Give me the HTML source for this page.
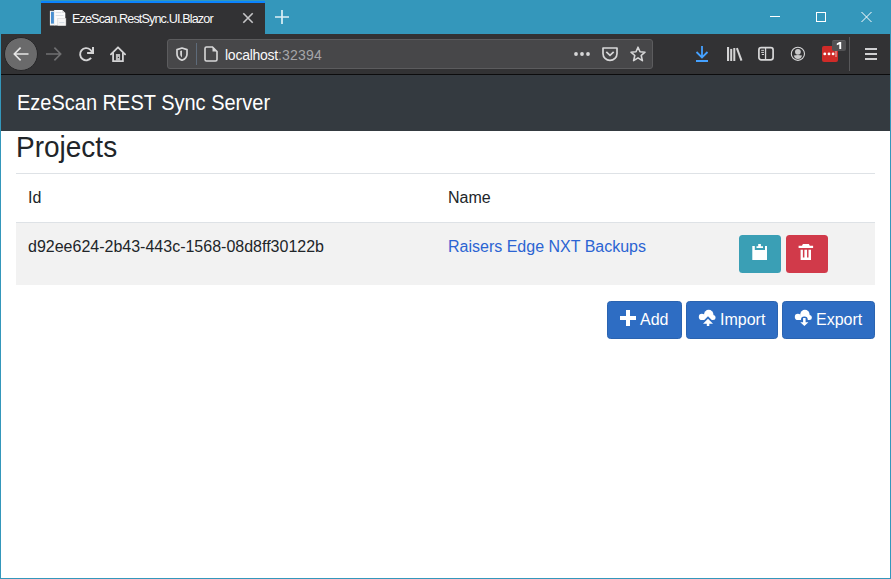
<!DOCTYPE html>
<html><head><meta charset="utf-8">
<style>
*{box-sizing:border-box;margin:0;padding:0}
html,body{width:891px;height:579px;overflow:hidden;background:#3497bb;font-family:"Liberation Sans",sans-serif;position:relative}
.abs{position:absolute}
svg{position:absolute;overflow:visible}
#tab{left:41px;top:1px;width:224px;height:33px;background:#323234;border-top:2px solid #0a84ff}
#tabtitle{left:72px;top:11.5px;font-size:12.6px;letter-spacing:-0.86px;color:#f9f9fa;white-space:nowrap}
#toolbar{left:1px;top:34px;width:889px;height:40px;background:#323234}
#tline{left:1px;top:74px;width:889px;height:1px;background:#0c0c0d}
#content{left:1px;top:75px;width:889px;height:503px;background:#fff}
#navbar{left:1px;top:75px;width:889px;height:56px;background:#343a40}
#brand{left:17px;top:91px;font-size:20px;color:#fff;white-space:nowrap;transform:scaleY(1.065);transform-origin:0 4px}
#h3{left:16px;top:132px;font-size:28px;color:#212529;white-space:nowrap;transform:scaleY(1.05);transform-origin:0 24.7px}
.hr{height:1px;background:#dee2e6}
#stripe{left:16px;top:223px;width:859px;height:62px;background:#f2f2f2}
.td{font-size:16px;color:#212529;white-space:nowrap}
.btn{border-radius:3.5px}
#url{left:167px;top:39px;width:486px;height:30px;background:#474749;border-radius:3px;border:1px solid #5c5c5e}
#urltext{left:225px;top:47px;font-size:14px;letter-spacing:-0.25px;color:#f9f9fa;white-space:nowrap}
#urltext span{color:#a5a5a8;letter-spacing:0.2px}
.bw{color:#fff;font-size:16px;white-space:nowrap}
</style></head><body>
<!-- tab strip -->
<div class="abs" id="tab"></div>
<svg style="left:46px;top:6px" width="24" height="24" viewBox="0 0 24 24"><rect x="3.9" y="4.8" width="4.6" height="14.7" fill="#f3f3f3"/><rect x="5" y="5.8" width="2.9" height="11.8" fill="#4a8fd0"/><path d="M8.1 3.9H16.1L19.3 7.1V19.5H8.1z" fill="#fbfbfb"/><path d="M16.1 3.9V7.1H19.3" fill="#dcdcdc"/><path d="M9.7 6.6H15.5M9.7 9.5H17.5" stroke="#d6dbe1" stroke-width="0.9"/><rect x="11.8" y="12.4" width="8.1" height="7.1" fill="#f6f6f6" stroke="#cfcfcf" stroke-width="0.5"/><path d="M13.3 16.6H18.3" stroke="#cdd6e0" stroke-width="0.9"/></svg>
<div class="abs" id="tabtitle">EzeScan.RestSync.UI.Blazor</div>
<svg style="left:243px;top:13px" width="10" height="10" viewBox="0 0 10 10"><path d="M0.3 0.3L9.7 9.7M9.7 0.3L0.3 9.7" stroke="#c6c6c8" stroke-width="1.6"/></svg>
<svg style="left:275px;top:10px" width="14" height="14" viewBox="0 0 14 14"><path d="M7 0v14M0 7h14" stroke="#dcf0f6" stroke-width="1.7"/></svg>
<!-- window controls -->
<div class="abs" style="left:770px;top:16px;width:10px;height:1px;background:#fff"></div>
<div class="abs" style="left:816px;top:12px;width:10px;height:10px;border:1px solid #fff"></div>
<svg style="left:861px;top:12px" width="11" height="10" viewBox="0 0 11 10"><path d="M0.5 0L10.5 10M10.5 0L0.5 10" stroke="#fff" stroke-width="1"/></svg>
<!-- toolbar -->
<div class="abs" id="toolbar"></div>
<div class="abs" style="left:4px;top:37px;width:34px;height:34px;border-radius:50%;background:#6a6a6b;border:1px solid #262628"></div>
<svg style="left:13px;top:46px" width="16" height="16" viewBox="0 0 16 16"><path d="M15.5 8H1.5M7.6 1.6L1.3 8L7.6 14.4" stroke="#e6e6e6" stroke-width="1.6" fill="none"/></svg>
<svg style="left:46px;top:47px" width="16" height="14" viewBox="0 0 16 14"><path d="M0 7H14.5M8.4 0.6L14.7 7L8.4 13.4" stroke="#707072" stroke-width="1.6" fill="none"/></svg>
<svg style="left:78px;top:46px" width="16" height="16" viewBox="0 0 16 16"><path d="M13.1 11.9A6.1 6.1 0 1 1 12.2 3.6L14.6 6.4" stroke="#d4d4d5" stroke-width="1.9" fill="none"/><path d="M15 0.9V7H9.1" stroke="#d4d4d5" stroke-width="2" fill="none"/></svg>
<svg style="left:110px;top:46px" width="16" height="16" viewBox="0 0 16 16"><path d="M0.9 8.4L8 1.3L15.1 8.4" stroke="#d4d4d5" stroke-width="1.8" fill="none" stroke-linejoin="round" stroke-linecap="round"/><path d="M3.1 6.6V15.1H12.9V6.6" stroke="#d4d4d5" stroke-width="1.8" fill="none"/><rect x="5.9" y="8" width="4.2" height="7" fill="#bdbdbe"/><circle cx="8.4" cy="11.4" r="0.65" fill="#323234"/></svg>
<div class="abs" id="url"></div>
<svg style="left:176px;top:47px" width="12" height="14" viewBox="0 0 12 14"><path d="M6 1L11 2.6V7C11 10 8.8 12.3 6 13.2C3.2 12.3 1 10 1 7V2.6z" stroke="#d7d7d8" stroke-width="1.7" fill="none" stroke-linejoin="round"/><path d="M6 3.5V10.5C5 9.8 4.2 8.5 4.2 7V4.1z" fill="#d7d7d8"/></svg>
<div class="abs" style="left:196px;top:43px;width:1px;height:22px;background:#5e6b7a"></div>
<svg style="left:204px;top:46px" width="14" height="16" viewBox="0 0 14 16"><path d="M2.5 1H8.5L13 5.5V13.5A1.5 1.5 0 0 1 11.5 15H2.5A1.5 1.5 0 0 1 1 13.5V2.5A1.5 1.5 0 0 1 2.5 1z" stroke="#d7d7d8" stroke-width="1.6" fill="none"/><path d="M8.5 1V5.5H13" fill="#d7d7d8"/></svg>
<div class="abs" id="urltext">localhost<span>:32394</span></div>
<svg style="left:573px;top:52px" width="18" height="4" viewBox="0 0 18 4"><circle cx="3" cy="2" r="1.9" fill="#d7d7d8"/><circle cx="9" cy="2" r="1.9" fill="#d7d7d8"/><circle cx="15" cy="2" r="1.9" fill="#d7d7d8"/></svg>
<svg style="left:602px;top:47px" width="16" height="15" viewBox="0 0 16 15"><path d="M1 1H15V6.4A7 7 0 0 1 1 6.4z" stroke="#d7d7d8" stroke-width="1.7" fill="none" stroke-linejoin="round"/><path d="M4.3 4.8L8 8.4L11.7 4.8" stroke="#d7d7d8" stroke-width="1.7" fill="none"/></svg>
<svg style="left:630px;top:46px" width="16" height="16" viewBox="0 0 16 16"><path d="M8 1.2L10 5.8L15 6.2L11.2 9.5L12.4 14.6L8 11.9L3.6 14.6L4.8 9.5L1 6.2L6 5.8z" stroke="#d7d7d8" stroke-width="1.6" fill="none" stroke-linejoin="round"/></svg>
<!-- right toolbar icons -->
<svg style="left:695px;top:46px" width="14" height="16" viewBox="0 0 14 16"><path d="M7 0V11M1.5 6L7 11.5L12.5 6" stroke="#45a1ff" stroke-width="1.8" fill="none"/><rect x="1" y="14" width="12" height="2" fill="#45a1ff"/></svg>
<svg style="left:726px;top:47px" width="17" height="15" viewBox="0 0 17 15"><rect x="1" y="0" width="2.1" height="14" fill="#d4d4d5"/><rect x="4.2" y="1.9" width="2" height="12.1" fill="#d4d4d5"/><rect x="7.3" y="1" width="2" height="13" fill="#d4d4d5"/><path d="M10.9 1.2L15.5 13.6" stroke="#d4d4d5" stroke-width="2"/></svg>
<svg style="left:758px;top:46px" width="16" height="15" viewBox="0 0 16 15"><rect x="0.9" y="1.7" width="14.2" height="12.2" rx="2.3" stroke="#d7d7d8" stroke-width="1.7" fill="none"/><rect x="6.9" y="2" width="1.3" height="12" fill="#d7d7d8"/><path d="M3.6 4.3H5.6M3.6 6.4H5.6M4.2 8.5H5.6" stroke="#d7d7d8" stroke-width="1" stroke-linecap="round"/></svg>
<svg style="left:790px;top:46px" width="16" height="16" viewBox="0 0 16 16"><circle cx="7.9" cy="7.8" r="6.6" stroke="#d7d7d8" stroke-width="1.1" fill="none"/><circle cx="7.9" cy="5.8" r="2.9" fill="#c9c9ca"/><path d="M3.8 9.6Q7.9 8.4 12 9.6Q11.2 13.1 7.9 13.1Q4.6 13.1 3.8 9.6z" fill="#c9c9ca"/></svg>
<div class="abs" style="left:822px;top:46px;width:16px;height:16px;background:#cf2b28;border-radius:2px"></div>
<svg style="left:822px;top:46px" width="16" height="16" viewBox="0 0 16 16"><circle cx="2.8" cy="7.9" r="1.4" fill="#fff"/><circle cx="7" cy="7.9" r="1.4" fill="#fff"/><circle cx="11.1" cy="7.9" r="1.4" fill="#fff"/><rect x="13.5" y="5" width="1" height="6" fill="rgba(255,255,255,.65)"/></svg>
<div class="abs" style="left:832px;top:40px;width:14px;height:11px;background:#515153;border-radius:2px;border-top:1px solid #5e5e60"></div>
<svg style="left:832px;top:40px" width="14" height="11" viewBox="0 0 14 11"><path d="M7.3 2H9.2V9H7.3V4.2L4.8 5.2V3.6z" fill="#fff"/></svg>
<div class="abs" style="left:849px;top:37px;width:1px;height:34px;background:#58585a"></div>
<div class="abs" style="left:865px;top:48px;width:12px;height:2px;background:#d0d0d1"></div>
<div class="abs" style="left:865px;top:53px;width:12px;height:2px;background:#d0d0d1"></div>
<div class="abs" style="left:865px;top:58px;width:12px;height:2px;background:#d0d0d1"></div>
<div class="abs" id="tline"></div>
<!-- page -->
<div class="abs" id="content"></div>
<div class="abs" id="navbar"></div>
<div class="abs" id="brand">EzeScan REST Sync Server</div>
<div class="abs" id="h3">Projects</div>
<div class="abs hr" style="left:16px;top:173px;width:859px"></div>
<div class="abs hr" style="left:16px;top:222px;width:859px"></div>
<div class="abs" id="stripe"></div>
<div class="abs td" style="left:28px;top:189px">Id</div>
<div class="abs td" style="left:448px;top:189px">Name</div>
<div class="abs td" style="left:28px;top:238px">d92ee624-2b43-443c-1568-08d8ff30122b</div>
<div class="abs td" style="left:448px;top:238px;color:#2b64d3">Raisers Edge NXT Backups</div>
<div class="abs btn" style="left:739px;top:235px;width:42px;height:38px;background:#3a9fb5"></div>
<svg style="left:748px;top:240px" width="24" height="24" viewBox="0 0 24 24"><path d="M4.3 6H6.8V10H17V6H19V20H4.3z" fill="#fff"/><path d="M8.5 6.2H10.2V4.1H12.9V6.2H15V8H8.5z" fill="#fff"/></svg>
<div class="abs btn" style="left:786px;top:235px;width:42px;height:38px;background:#d13a4a"></div>
<svg style="left:794px;top:240px" width="24" height="24" viewBox="0 0 24 24"><path d="M8.9 4.1H14.9L15.8 5.8H19.1V7.9H4.6V5.8H8z" fill="#fff"/><path d="M6.6 9.7H8.9V17.6H10.4V9.7H13.05V17.6H14.5V9.7H17V19.9H6.6z" fill="#fff"/></svg>
<div class="abs btn" style="left:607px;top:301px;width:75px;height:38px;background:#2e6dc3;border:1px solid #2a63b0"></div>
<div class="abs btn" style="left:686px;top:301px;width:92px;height:38px;background:#2e6dc3;border:1px solid #2a63b0"></div>
<div class="abs btn" style="left:782px;top:301px;width:93px;height:38px;background:#2e6dc3;border:1px solid #2a63b0"></div>
<svg style="left:620px;top:310px" width="16" height="16" viewBox="0 0 16 16"><path d="M6 0H10V6H16V10H10V16H6V10H0V6H6z" fill="#fff"/></svg>
<div class="abs bw" style="left:640px;top:311px">Add</div>
<svg style="left:696px;top:308px" width="20" height="20" viewBox="0 0 20 20"><g fill="#fff"><circle cx="5.9" cy="8.9" r="3.1"/><circle cx="12.7" cy="6.5" r="4.7"/><circle cx="17" cy="9.6" r="2.5"/><rect x="5.9" y="8" width="11.1" height="4"/></g><path d="M12 8.2L16 12.2H8z" fill="#2e6dc3"/><path d="M12 10.7L17 15.7H13.3V18H10.8V15.7H7z" fill="#fff"/></svg>
<div class="abs bw" style="left:720px;top:311px">Import</div>
<svg style="left:792px;top:308px" width="20" height="20" viewBox="0 0 20 20"><g fill="#fff"><circle cx="5.9" cy="8.9" r="3.1"/><circle cx="12.9" cy="6.5" r="4.7"/><circle cx="17.3" cy="9.6" r="2.5"/><rect x="5.9" y="8" width="11.4" height="4"/></g><path d="M8.9 12A3.45 3.45 0 0 1 15.8 12z" fill="#2e6dc3"/><path d="M11.1 9.9H13.6V14.2H16.4L12.4 18.1L8.3 14.2H11.1z" fill="#fff"/></svg>
<div class="abs bw" style="left:816px;top:311px">Export</div>
</body></html>
